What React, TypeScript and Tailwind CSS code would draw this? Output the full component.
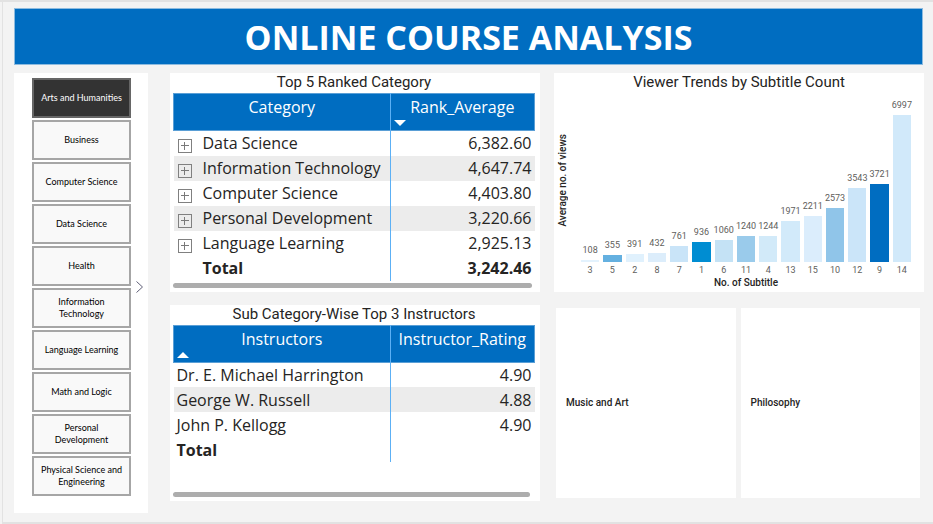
import React from "react";

const categories = [
  "Arts and Humanities",
  "Business",
  "Computer Science",
  "Data Science",
  "Health",
  "Information Technology",
  "Language Learning",
  "Math and Logic",
  "Personal Development",
  "Physical Science and Engineering",
];

const ranked = [
  ["Data Science", "6,382.60"],
  ["Information Technology", "4,647.74"],
  ["Computer Science", "4,403.80"],
  ["Personal Development", "3,220.66"],
  ["Language Learning", "2,925.13"],
];

const instructors = [
  ["Dr. E. Michael Harrington", "4.90"],
  ["George W. Russell", "4.88"],
  ["John P. Kellogg", "4.90"],
];

const bars = [
  { subtitle: 3, views: 108, color: "bg-[#e3f2fd]" },
  { subtitle: 5, views: 355, color: "bg-[#64b0e0]" },
  { subtitle: 2, views: 391, color: "bg-[#e0f1fd]" },
  { subtitle: 8, views: 432, color: "bg-[#dcedfb]" },
  { subtitle: 7, views: 761, color: "bg-[#c9e4f8]" },
  { subtitle: 1, views: 936, color: "bg-[#008dd2]" },
  { subtitle: 6, views: 1060, color: "bg-[#c4e2f5]" },
  { subtitle: 11, views: 1240, color: "bg-[#9acbeb]" },
  { subtitle: 4, views: 1244, color: "bg-[#d2eaf9]" },
  { subtitle: 13, views: 1971, color: "bg-[#d2eafa]" },
  { subtitle: 15, views: 2211, color: "bg-[#dbedfc]" },
  { subtitle: 10, views: 2573, color: "bg-[#90c5e9]" },
  { subtitle: 12, views: 3543, color: "bg-[#cbe5f9]" },
  { subtitle: 9, views: 3721, color: "bg-[#006dc1]" },
  { subtitle: 14, views: 6997, color: "bg-[#d1e9fa]" },
];

const maxViews = 6997;

function CardTitle({ children }: { children: React.ReactNode }) {
  return (
    <h2 className="h-5 text-center font-['Roboto',sans-serif] text-[15px] leading-[19px] text-[#252423]">
      {children}
    </h2>
  );
}

function ExpandIcon() {
  return (
    <svg viewBox="0 0 14 14" className="size-[14px]" fill="none" aria-hidden="true">
      <rect x="0.5" y="0.5" width="13" height="13" stroke="#808080" />
      <path d="M3 6.5h8M6.5 3v8" stroke="#7a7a7a" />
    </svg>
  );
}

function SortIcon({ up }: { up?: boolean }) {
  return (
    <svg viewBox="0 0 12 6" className="absolute bottom-1 left-[3px] h-[6px] w-3" fill="white" aria-hidden="true">
      {up ? <path d="M0 6 6 0l6 6z" /> : <path d="M0 0l6 6 6-6z" />}
    </svg>
  );
}

function HeaderCell({ label, sort, className = "" }: { label: string; sort?: "up" | "down"; className?: string }) {
  return (
    <th scope="col" className={`h-9 p-0 font-normal ${className}`}>
      <button type="button" className="relative block h-9 w-full pb-[10px] text-center leading-[26px]">
        {label}
        {sort && <SortIcon up={sort === "up"} />}
      </button>
    </th>
  );
}

const tableStyle = "w-full table-fixed border-collapse font-['Open_Sans',sans-serif] text-[16px] leading-[24px] text-[#252423]";
const headRow = "border border-[#5a9fd6] bg-[#006dc1] text-white";
const divider = "border-l border-l-[#5cb0f5]";

function Scrollbar() {
  return <div className="h-[5px] rounded-full bg-[#adadad]" />;
}

function RankedTable() {
  return (
    <section className="bg-white pr-[5px] pb-1 pl-[3px]">
      <CardTitle>Top 5 Ranked Category</CardTitle>
      <table className={tableStyle}>
        <colgroup>
          <col className="w-[60%]" />
          <col />
        </colgroup>
        <thead>
          <tr className={headRow}>
            <HeaderCell label="Category" />
            <HeaderCell label="Rank_Average" sort="down" className={divider} />
          </tr>
        </thead>
        <tbody>
          {ranked.map(([name, value]) => (
            <tr key={name} className="h-[25px] even:bg-[#ececec]">
              <td className="p-0">
                <div className="flex items-center">
                  <button type="button" aria-label={`Expand ${name}`} className="mr-[11px] ml-1 pt-[6px]">
                    <ExpandIcon />
                  </button>
                  <span className="whitespace-nowrap">{name}</span>
                </div>
              </td>
              <td className={`p-0 pr-[3px] text-right ${divider}`}>{value}</td>
            </tr>
          ))}
          <tr className="h-[25px] font-bold">
            <td className="p-0 pl-[29px]">Total</td>
            <td className={`p-0 pr-[3px] text-right ${divider}`}>3,242.46</td>
          </tr>
        </tbody>
      </table>
      <div className="pt-[2px] pr-[3px]">
        <Scrollbar />
      </div>
    </section>
  );
}

function InstructorTable() {
  return (
    <section className="bg-white pr-[5px] pb-1 pl-[3px]">
      <CardTitle>Sub Category-Wise Top 3 Instructors</CardTitle>
      <table className={tableStyle}>
        <colgroup>
          <col className="w-[60%]" />
          <col />
        </colgroup>
        <thead>
          <tr className={headRow}>
            <HeaderCell label="Instructors" sort="up" />
            <HeaderCell label="Instructor_Rating" className={divider} />
          </tr>
        </thead>
        <tbody>
          {instructors.map(([name, value]) => (
            <tr key={name} className="h-[25px] even:bg-[#ececec]">
              <td className="p-0 pl-[3px]">{name}</td>
              <td className={`p-0 pr-[3px] text-right ${divider}`}>{value}</td>
            </tr>
          ))}
          <tr className="h-[25px] font-bold">
            <td className="p-0 pl-[3px]">Total</td>
            <td className={divider} />
          </tr>
        </tbody>
      </table>
      <div className="pt-[30px] pr-[5px]">
        <Scrollbar />
      </div>
    </section>
  );
}

const chartLabel = "font-['Roboto',sans-serif] text-[9px] leading-[12px] text-[#605e5c]";
const axisTitle = "text-center font-['Roboto',sans-serif] text-[10px] leading-[14px] font-medium text-[#252423]";

function ViewerChart() {
  return (
    <section className="h-[219px] bg-white">
      <CardTitle>Viewer Trends by Subtitle Count</CardTitle>
      <div className="flex pr-[11px] pl-[2px]">
        <div className="flex h-[175px] w-[23px] items-center">
          <span className={`rotate-180 [writing-mode:vertical-rl] ${axisTitle}`}>Average no. of views</span>
        </div>
        <div className="min-w-0 flex-1">
          <div className="flex h-[169px] items-end">
            {bars.map((b) => (
              <div
                key={b.subtitle}
                className="flex h-full min-w-0 flex-1 flex-col items-center justify-end px-[2px]"
              >
                <span className={`mb-1 ${chartLabel}`}>{b.views}</span>
                <div
                  className={`w-full shrink-0 ${b.color}`}
                  style={{ height: `${(b.views / maxViews) * 87}%` }}
                />
              </div>
            ))}
          </div>
          <div className="flex pt-[2px]">
            {bars.map((b) => (
              <span key={b.subtitle} className={`min-w-0 flex-1 text-center ${chartLabel}`}>
                {b.subtitle}
              </span>
            ))}
          </div>
          <p className={axisTitle}>No. of Subtitle</p>
        </div>
      </div>
    </section>
  );
}

export default function App() {
  return (
    <div className="min-h-screen border-t-2 border-[#e2e2e2] bg-[#f3f3f3]">
      <main className="ml-[2px] border-b-2 border-l border-[#e2e2e2] pt-[6px] pr-[9px] pb-[9px] pl-[11px]">
        <header className="mr-px flex h-[57px] items-center justify-center border border-[#8dbbdf] bg-[#006dc1]">
          <h1 className="font-['Open_Sans',sans-serif] text-[34px] leading-[40px] font-bold text-white">
            ONLINE COURSE ANALYSIS
          </h1>
        </header>

        <div className="flex items-start pt-2">
          <aside className="flex w-[134px] shrink-0 items-center bg-white pt-[5px] pb-[17px] pl-[18px]">
            <div className="flex w-[99px] flex-col gap-[2px]">
              {categories.map((name, i) => (
                <button
                  key={name}
                  type="button"
                  aria-pressed={i === 0}
                  className={`h-10 border-2 px-1 text-center font-['Lato',sans-serif] text-[9px] leading-[12px] ${
                    i === 0 ? "border-[#666666] bg-[#333333] text-white" : "border-[#a6a6a6] bg-[#f9f9f9] text-black"
                  }`}
                >
                  {name}
                </button>
              ))}
            </div>
            <button type="button" aria-label="Next categories" className="ml-[5px]">
              <svg viewBox="0 0 8 12" className="h-3 w-2" fill="none" stroke="#606078" aria-hidden="true">
                <path d="M0.5 0.5 6.5 6 0.5 11.5" />
              </svg>
            </button>
          </aside>

          <div className="ml-[22px] flex min-w-0 flex-1 flex-col gap-[13px]">
            <RankedTable />
            <InstructorTable />
          </div>

          <div className="ml-[14px] min-w-0 flex-1">
            <ViewerChart />
            <div className="grid grid-cols-2 gap-[5px] pt-4 pr-1 pl-[2px]">
              {["Music and Art", "Philosophy"].map((name) => (
                <div
                  key={name}
                  className="flex h-[190px] items-center bg-white pl-[10px] font-['Roboto',sans-serif] text-[10px] leading-[14px] font-medium text-[#252423]"
                >
                  {name}
                </div>
              ))}
            </div>
          </div>
        </div>
      </main>
    </div>
  );
}
